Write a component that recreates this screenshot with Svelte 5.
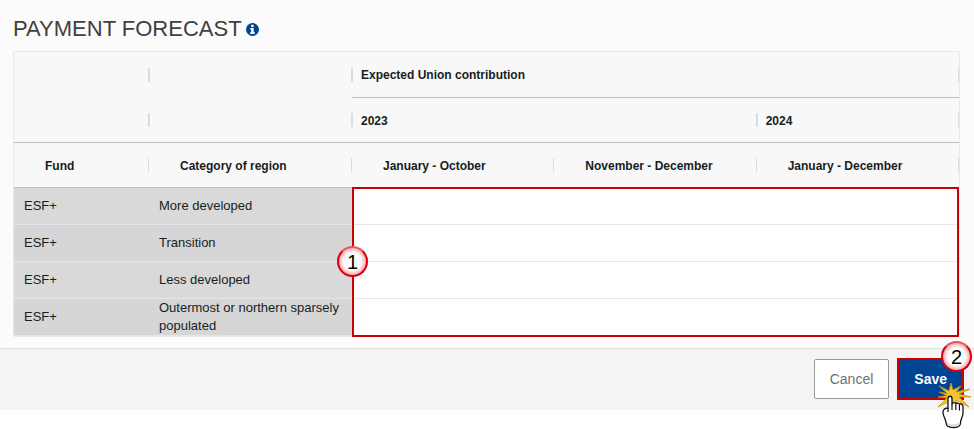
<script lang="ts">
  const funds = [
    { fund: 'ESF+', region: 'More developed' },
    { fund: 'ESF+', region: 'Transition' },
    { fund: 'ESF+', region: 'Less developed' },
    { fund: 'ESF+', region: 'Outermost or northern sparsely populated' },
  ];

  const periods = ['January - October', 'November - December', 'January - December'];
</script>

<main class="page">
  <section class="forecast">
    <h2 class="title">
      PAYMENT FORECAST
      <svg class="info" viewBox="0 0 13 13" aria-hidden="true">
        <circle cx="6.5" cy="6.5" r="6.5" fill="#004494" />
        <path d="M5.200 1.800h2.400v2.100H5.200zM4.200 4.900h3.500v4.300h1v1.700H4.200V9.200h1V6.500h-1z" fill="#fff" />
      </svg>
    </h2>

    <div class="table-wrap">
      <table>
        <colgroup>
          <col class="col-fund" />
          <col class="col-region" />
          <col />
          <col />
          <col />
        </colgroup>
        <thead>
          <tr class="group top">
            <th></th>
            <th></th>
            <th class="lined" colspan="3">Expected Union contribution</th>
          </tr>
          <tr class="group years">
            <th></th>
            <th></th>
            <th colspan="2">2023</th>
            <th>2024</th>
          </tr>
          <tr class="labels">
            <th>Fund</th>
            <th>Category of region</th>
            {#each periods as period}
              <th>{period}</th>
            {/each}
          </tr>
        </thead>
        <tbody>
          {#each funds as row}
            <tr>
              <td class="locked">{row.fund}</td>
              <td class="locked">{row.region}</td>
              {#each periods as _}
                <td></td>
              {/each}
            </tr>
          {/each}
        </tbody>
      </table>
      <div class="highlight">
        <span class="badge badge-fields">1</span>
      </div>
    </div>
  </section>

  <footer class="actions">
    <button class="btn cancel" type="button">Cancel</button>
    <div class="save-frame">
      <button class="btn save" type="button">Save</button>
      <span class="badge badge-save">2</span>
      <svg class="pointer" viewBox="0 0 36 46" aria-hidden="true">
        <path
          d="M11.500 10.500 3 3l10 5 2-8 2 7 8-4-5 6 14-3-11 5 12 3-12 0 10 10-13-7 1 6-5-6-14 7 9-9-9-1 9-1.500L3 9z"
          fill="#f4c330"
          stroke="#c8920c"
          stroke-width="0.8"
        />
        <path
          d="M12 15.500c0-3 4-3 4 0v5.500c.6-2 3.400-1.800 3.800 0 .8-1.600 3.200-1.200 3.600.6 1-1.400 3.600-.6 3.600 2v6.400c0 4-2.500 6-2.500 10 0 3-3 4.500-7 4.500-4.500 0-7.500-1.500-7.500-5 0-3-3-6-3-10 0-3 2-5 5-4z"
          fill="#fff"
          stroke="#111"
          stroke-width="1.3"
          stroke-linejoin="round"
        />
        <path d="M12 25v4M16 21v6M19.800 21.500v5.500M23.400 22v5.500" fill="none" stroke="#111" stroke-width="1.200" />
        <path d="M11 39c2 3 10 3 12.500 0v2.500c-2 3-10 3-12.500 0z" fill="#dedede" />
      </svg>
    </div>
  </footer>
</main>

<style>
  :global(body) {
    margin: 0;
    min-height: 100vh;
    background: #fff;
  }

  .page {
    font-family: 'Liberation Sans', Arial, sans-serif;
    color: #181d1f;
    background: #fbfbfb;
  }

  .forecast {
    padding: 16px 14px 11px 13px;
  }

  .title {
    display: flex;
    align-items: center;
    gap: 4px;
    margin: 0 0 10px;
    font-size: 22px;
    font-weight: 400;
    line-height: 25px;
    color: #404040;
  }

  .info {
    width: 13px;
    height: 13px;
    margin-top: 2px;
  }

  .table-wrap {
    position: relative;
    border: 1px solid #e8e8e8;
    border-radius: 2px;
  }

  table {
    width: 100%;
    table-layout: fixed;
    border-collapse: separate;
    border-spacing: 0;
  }

  .col-fund {
    width: 135px;
  }

  .col-region {
    width: 203px;
  }

  th,
  td {
    box-sizing: border-box;
    text-align: left;
  }

  th {
    height: 45px;
    padding: 2px 9px 0;
    font-size: 12px;
    font-weight: 700;
    /* short divider at the end of each header cell */
    background: linear-gradient(#d9dce1, #d9dce1) right center / 1px 14px no-repeat #f8f8f8;
  }

  /* group dividers sit on both sides of the cell edge */
  .group th + th {
    background:
      linear-gradient(#d9dce1, #d9dce1) left center / 1px 14px no-repeat,
      linear-gradient(#d9dce1, #d9dce1) right center / 1px 14px no-repeat #f8f8f8;
  }

  .top th {
    height: 46px;
    padding-top: 0;
  }

  .lined {
    border-bottom: 1px solid #b8bfc6;
  }

  .years th {
    border-bottom: 1px solid #babfc7;
  }

  .labels th {
    padding: 2px 31px 0;
    border-bottom: 1px solid #babfc7;
  }

  td {
    height: 37px;
    padding: 0 10px;
    font-size: 13px;
    line-height: 18px;
    background: #fff;
    border-bottom: 1px solid #e2e6ed;
  }

  .locked {
    background: #d9d9d9;
  }

  tr:nth-child(even) .locked {
    background: #d6d6d6;
  }

  .highlight {
    position: absolute;
    top: 135px;
    right: 0;
    bottom: -1px;
    left: 338px;
    border: 2px solid #cc0000;
    pointer-events: none;
  }

  .badge {
    position: absolute;
    display: flex;
    align-items: center;
    justify-content: center;
    box-sizing: border-box;
    width: 31px;
    height: 31px;
    border: 2px solid #d9000d;
    border-top-color: #ea5660;
    border-radius: 50%;
    background: radial-gradient(circle closest-side, #fff 65%, #f5a9ad 100%);
    font-size: 20px;
    line-height: 22px;
    color: #000;
  }

  .badge-fields {
    top: 57px;
    left: -17px;
  }

  .actions {
    display: flex;
    align-items: center;
    justify-content: flex-end;
    gap: 8px;
    padding: 9px 10px 10px;
    background: #f4f4f4;
    border-top: 1px solid #dfdfdf;
  }

  .btn {
    box-sizing: border-box;
    font-family: inherit;
    font-size: 14px;
    cursor: pointer;
  }

  .cancel {
    height: 40px;
    padding: 0 15px;
    color: #707070;
    background: #fff;
    border: 1px solid #999;
    border-radius: 2px;
  }

  .save-frame {
    position: relative;
    border: 2px solid #cc0000;
  }

  .save {
    display: block;
    height: 38px;
    padding: 0 15px;
    font-weight: 700;
    color: #fff;
    background: #004494;
    border: 0;
  }

  .badge-save {
    top: -19px;
    right: -10px;
  }

  .pointer {
    position: absolute;
    top: 23px;
    right: -10px;
    width: 36px;
    height: 46px;
  }
</style>
